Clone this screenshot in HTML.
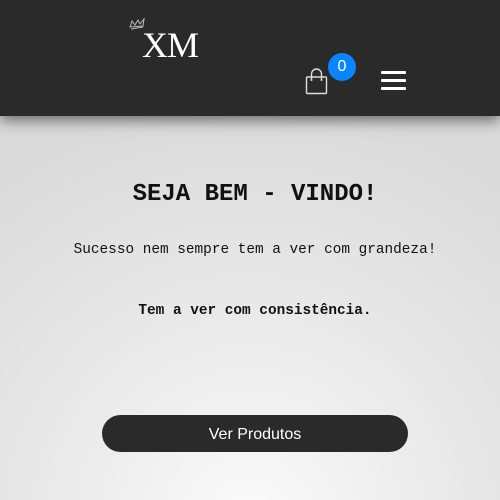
<!DOCTYPE html>
<html><head><style>
html,body{margin:0;padding:0;width:500px;height:500px;overflow:hidden}
body{background:radial-gradient(ellipse 420px 420px at 250px 520px,#fbfbfb 0%,#ececec 40%,#dadada 100%);font-family:"Liberation Mono",monospace;position:relative}
.hdr{position:absolute;left:0;top:0;width:500px;height:116px;background:#2a2a2a;box-shadow:0 4px 14px rgba(0,0,0,.55)}
.xm{position:absolute;left:142px;top:24px;font:36px "Liberation Serif",serif;color:#fff;letter-spacing:-1px}
.badge{position:absolute;left:328px;top:53px;width:28px;height:28px;border-radius:50%;background:#0a84ff;color:#fff;font:16px "Liberation Sans",sans-serif;text-align:center;line-height:27px}
.t{position:absolute;left:5px;width:500px;text-align:center;color:#111;white-space:nowrap}
.btn{position:absolute;left:102px;top:415px;width:306px;height:37px;border-radius:19px;background:#2a2a2a;color:#fff;font:16px "Liberation Sans",sans-serif;text-align:center;line-height:39px}
</style></head><body>
<div class="hdr">
<svg style="position:absolute;left:128px;top:17px" width="20" height="16" viewBox="0 0 20 16"><path d="M2 10 L4 4 L7 8 L10 3 L12 7 L16 2 L15 9 Z M3 12 L15 10" fill="none" stroke="#bbb" stroke-width="1"/></svg>
<div class="xm">XM</div>
<svg style="position:absolute;left:305px;top:68px" width="24" height="28" viewBox="0 0 24 28"><rect x="1.5" y="9" width="20" height="16.5" rx="1" fill="none" stroke="#ddd" stroke-width="1.4"/><path d="M6.5 12 V6 a5 5 0 0 1 10 0 V12" fill="none" stroke="#ddd" stroke-width="1.4"/><circle cx="6.5" cy="12" r="1" fill="#ddd"/><circle cx="16.5" cy="12" r="1" fill="#ddd"/></svg>
<div class="badge">0</div>
<div style="position:absolute;left:381px;top:71px;width:25px;height:3px;background:#fff;border-radius:1px"></div>
<div style="position:absolute;left:381px;top:79px;width:25px;height:3px;background:#fff;border-radius:1px"></div>
<div style="position:absolute;left:381px;top:87px;width:25px;height:3px;background:#fff;border-radius:1px"></div>
</div>
<div class="t" style="top:181px;font-size:24px;font-weight:bold">SEJA BEM - VINDO!</div>
<div class="t" style="top:242px;font-size:14.4px">Sucesso nem sempre tem a ver com grandeza!</div>
<div class="t" style="top:303px;font-size:14.4px;font-weight:bold">Tem a ver com consistência.</div>
<div class="btn">Ver Produtos</div>
</body></html>
